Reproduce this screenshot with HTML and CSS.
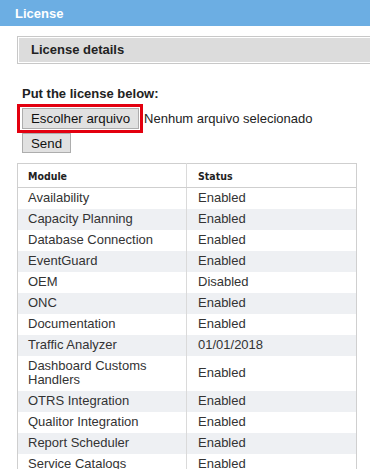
FILE: index.html
```html
<!DOCTYPE html>
<html>
<head>
    <meta charset="UTF-8">
    <title>License</title>
    <link rel="stylesheet" href="styles.css">
</head>
<body>
    <div class="title-bar">License</div>
    <div class="content">
        <div class="details-box">
            <div class="details-inner">License details</div>
        </div>
        <form class="license-form">
            <label class="put-label">Put the license below:</label>
            <div class="file-row">
                <span class="highlight"><button type="button" class="btn">Escolher arquivo</button></span>
                <span class="file-name">Nenhum arquivo selecionado</span>
            </div>
            <button type="button" class="btn send-btn">Send</button>
        </form>
        <table class="modules">
            <tr><th>Module</th><th>Status</th></tr>
            <tr><td>Availability</td><td>Enabled</td></tr>
            <tr><td>Capacity Planning</td><td>Enabled</td></tr>
            <tr><td>Database Connection</td><td>Enabled</td></tr>
            <tr><td>EventGuard</td><td>Enabled</td></tr>
            <tr><td>OEM</td><td>Disabled</td></tr>
            <tr><td>ONC</td><td>Enabled</td></tr>
            <tr><td>Documentation</td><td>Enabled</td></tr>
            <tr><td>Traffic Analyzer</td><td>01/01/2018</td></tr>
            <tr><td>Dashboard Customs Handlers</td><td>Enabled</td></tr>
            <tr><td>OTRS Integration</td><td>Enabled</td></tr>
            <tr><td>Qualitor Integration</td><td>Enabled</td></tr>
            <tr><td>Report Scheduler</td><td>Enabled</td></tr>
            <tr><td>Service Catalogs</td><td>Enabled</td></tr>
        </table>
    </div>
</body>
</html>
```

FILE: styles.css
```css
body {
    margin: 0;
    background-color: #fff;
    font-family: "Liberation Sans", Arial, sans-serif;
    font-size: 13px;
    color: #333;
    overflow: hidden;
}
.title-bar {
    background-color: #6caee3;
    color: #fff;
    font-weight: bold;
    font-size: 13px;
    height: 26px;
    line-height: 27px;
    padding-left: 15px;
}
.content {
    padding: 10px 0 0 17px;
}
/* details header box */
.details-box {
    border: 1px solid #c8c8c8;
    border-right: none;
    padding: 1px 0 1px 1px;
    margin-right: -10px;
}
.details-inner {
    background-color: #dcdcdc;
    height: 24px;
    line-height: 24px;
    padding-left: 12px;
    font-weight: bold;
    color: #222;
}
.license-form {
    margin-top: 22px;
    padding-left: 5px;
}
.put-label {
    display: block;
    font-weight: bold;
    color: #222;
    line-height: 15px;
}
.file-row {
    display: flex;
    align-items: center;
    margin-top: 3px;
    margin-left: -5px;
}
.highlight {
    border: 3px solid #e3000f;
    padding: 1px 1px 1px 2px;
    display: flex;
}
.file-name {
    color: #222;
    margin-left: 1px;
}
.btn {
    font-family: "Liberation Sans", Arial, sans-serif;
    font-size: 13.3px;
    color: #111;
    background-color: #e1e1e1;
    border: 1px solid #adadad;
    border-radius: 0;
    height: 21px;
    padding: 0 8px;
    margin: 0;
}
.send-btn {
    display: block;
    height: 20px;
}
/* module table */
.modules {
    margin-top: 10px;
    border-collapse: collapse;
    border: 1px solid #cfcfcf;
    width: 340px;
}
.modules th {
    font-family: "DejaVu Sans Condensed", "DejaVu Sans", sans-serif;
    font-size: 10.5px;
    font-weight: bold;
    text-align: left;
    color: #222;
    height: 23px;
    padding: 0 10px;
    border-bottom: 1px solid #cfcfcf;
}
.modules td {
    line-height: 14px;
    padding: 3px 10px 4px;
    vertical-align: middle;
}
.modules td:first-child, .modules th:first-child {
    width: 148px;
}
.modules td + td, .modules th + th {
    border-left: 1px solid #dadada;
    padding-left: 11px;
}
.modules tr:nth-child(odd) td {
    background-color: #eef0f3;
}
```
